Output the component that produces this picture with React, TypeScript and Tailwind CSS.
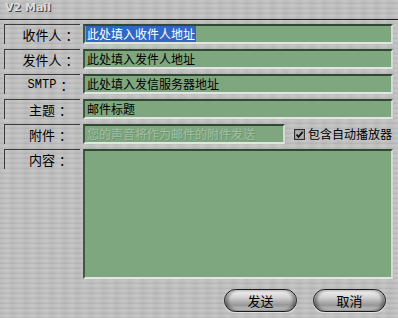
import React from "react";

const metal =
  "bg-[#c2c2c2] bg-[repeating-linear-gradient(180deg,rgba(255,255,255,0.22)_0px,rgba(0,0,0,0.04)_1px,rgba(255,255,255,0.12)_2px,rgba(0,0,0,0.08)_3px,rgba(255,255,255,0.06)_5px),repeating-linear-gradient(90deg,rgba(0,0,0,0.03)_0px,rgba(255,255,255,0.05)_7px,rgba(0,0,0,0.04)_13px)]";

const cjk = "font-['Noto_Sans_CJK_SC','Noto_Sans',sans-serif]";

function Label({ text, mono = false }: { text: string; mono?: boolean }) {
  return (
    <div className="w-[76px] h-[20px] shrink-0 flex items-center justify-center border-t border-l border-[#3a3a3a] text-[13px] leading-none text-black pl-[16px]">
      <span className={mono ? "font-['Liberation_Mono',monospace] text-[12px]" : ""}>{text}</span>
      <span className="ml-[4px]">：</span>
    </div>
  );
}

function Field({ children, className = "" }: { children?: React.ReactNode; className?: string }) {
  return (
    <div
      className={`h-[20px] flex items-center bg-[#7ea67f] border-t-2 border-l-2 border-t-[#2f4a30] border-l-[#3c5a3d] border-b-2 border-r-2 border-b-[#e2e6e2] border-r-[#d4d8d4] px-[1px] text-[12px] leading-none text-black ${className}`}
    >
      {children}
    </div>
  );
}

function PillButton({ text }: { text: string }) {
  return (
    <button
      type="button"
      className="w-[73px] h-[23px] rounded-full border border-[#1a1a1a] bg-[linear-gradient(180deg,#f6f6f6_0%,#d2d2d2_35%,#969696_72%,#cfcfcf_100%)] shadow-[inset_3px_0_3px_rgba(0,0,0,0.35),inset_-3px_0_3px_rgba(0,0,0,0.35),inset_0_1px_1px_#fff,0_1px_1px_rgba(255,255,255,0.6)] text-[13px] leading-none text-black flex items-center justify-center"
    >
      {text}
    </button>
  );
}

export default function App() {
  return (
    <div className={`w-[398px] h-[318px] overflow-hidden flex flex-col ${metal} ${cjk}`}>
      {/* Title */}
      <div className="h-[20px] shrink-0 border-b border-[#1e1e1e] flex items-start pl-[5px] pt-[2px]">
        <span className="font-['DejaVu_Sans',sans-serif] font-bold text-[11px] leading-none text-[#dcdcdc] [text-shadow:1px_1px_0_#444]">
          V2 Mail
        </span>
      </div>

      <div className="flex flex-col gap-[5px] pl-[4px] pr-[5px] pt-[4px]">
        <div className="flex gap-[3px]">
          <Label text="收件人" />
          <Field className="flex-1">
            <span className="bg-[#3167c4] text-white px-[1px] py-[2px]">此处填入收件人地址</span>
          </Field>
        </div>
        <div className="flex gap-[3px]">
          <Label text="发件人" />
          <Field className="flex-1">
            <span className="px-[1px]">此处填入发件人地址</span>
          </Field>
        </div>
        <div className="flex gap-[3px]">
          <Label text="SMTP" mono />
          <Field className="flex-1">
            <span className="px-[1px]">此处填入发信服务器地址</span>
          </Field>
        </div>
        <div className="flex gap-[3px]">
          <Label text="主题" />
          <Field className="flex-1">
            <span className="px-[1px]">邮件标题</span>
          </Field>
        </div>
        <div className="flex gap-[3px] items-center">
          <Label text="附件" />
          <Field className="w-[202px]">
            <span className="px-[1px] text-[#a3c0a4] [text-shadow:1px_1px_0_#6d926e]">您的声音将作为邮件的附件发送</span>
          </Field>
          <div className="flex items-center gap-[3px] ml-[6px]">
            <svg width="11" height="11" viewBox="0 0 11 11">
              <rect x="0.5" y="0.5" width="10" height="10" fill="#8a8a8a" stroke="#333" />
              <rect x="1.5" y="1.5" width="8" height="8" fill="#b0b0b0" />
              <path d="M2.5 5.5 L4.5 7.8 L8.7 2.8" fill="none" stroke="#111" strokeWidth="1.8" />
            </svg>
            <span className="text-[12px] leading-none text-black">包含自动播放器</span>
          </div>
        </div>
        <div className="flex gap-[3px] items-start">
          <Label text="内容" />
          <Field className="flex-1 h-[130px]" />
        </div>
      </div>

      <div className="flex justify-end gap-[16px] pr-[12px] pt-[10px]">
        <PillButton text="发送" />
        <PillButton text="取消" />
      </div>
    </div>
  );
}
